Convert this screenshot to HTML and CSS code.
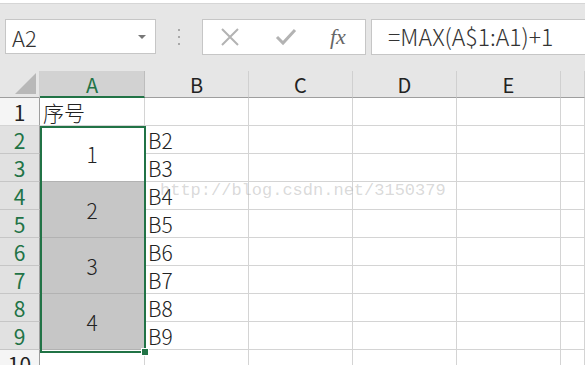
FILE: index.html
```html
<!DOCTYPE html>
<html lang="zh">

<head>
    <meta charset="UTF-8">
    <title>Excel 合并单元格序号</title>
    <link rel="stylesheet" href="styles.css">
</head>

<body>

    <!-- 编辑栏：名称框 + 按钮 + 公式 -->
    <div class="toolbar">
        <div class="name-box">
            <span>A2</span>
            <span class="caret"></span>
        </div>
        <div class="grip"><i></i><i></i><i></i></div>
        <div class="fx-box">
            <svg class="ico" width="20" height="20" viewBox="0 0 20 20">
                <path d="M2 2 L18 18 M18 2 L2 18" stroke="#b3b3b3" stroke-width="2" fill="none"/>
            </svg>
            <svg class="ico" width="22" height="20" viewBox="0 0 22 20">
                <path d="M2 10 L8 16 L20 3" stroke="#b3b3b3" stroke-width="3" fill="none"/>
            </svg>
            <span class="fx">fx</span>
        </div>
        <div class="formula">=MAX(A$1:A1)+1</div>
    </div>

    <!-- 工作表 -->
    <div class="sheet">
        <div class="grid">
            <div class="corner"><span></span></div>
            <div class="col-head active">A</div>
            <div class="col-head">B</div>
            <div class="col-head">C</div>
            <div class="col-head">D</div>
            <div class="col-head">E</div>
            <div class="col-head"></div>

            <div class="row-head">1</div>
            <div class="cell">序号</div>
            <div class="cell"></div><div class="cell"></div><div class="cell"></div><div class="cell"></div><div class="cell"></div>

            <div class="row-head sel">2</div>
            <div class="cell merged white">1</div>
            <div class="cell">B2</div><div class="cell"></div><div class="cell"></div><div class="cell"></div><div class="cell"></div>
            <div class="row-head sel">3</div>
            <div class="cell">B3</div><div class="cell"></div><div class="cell"></div><div class="cell"></div><div class="cell"></div>

            <div class="row-head sel">4</div>
            <div class="cell merged">2</div>
            <div class="cell">B4</div><div class="cell"></div><div class="cell"></div><div class="cell"></div><div class="cell"></div>
            <div class="row-head sel">5</div>
            <div class="cell">B5</div><div class="cell"></div><div class="cell"></div><div class="cell"></div><div class="cell"></div>

            <div class="row-head sel">6</div>
            <div class="cell merged">3</div>
            <div class="cell">B6</div><div class="cell"></div><div class="cell"></div><div class="cell"></div><div class="cell"></div>
            <div class="row-head sel">7</div>
            <div class="cell">B7</div><div class="cell"></div><div class="cell"></div><div class="cell"></div><div class="cell"></div>

            <div class="row-head sel">8</div>
            <div class="cell merged">4</div>
            <div class="cell">B8</div><div class="cell"></div><div class="cell"></div><div class="cell"></div><div class="cell"></div>
            <div class="row-head sel">9</div>
            <div class="cell">B9</div><div class="cell"></div><div class="cell"></div><div class="cell"></div><div class="cell"></div>

            <div class="row-head">10</div>
            <div class="cell"></div><div class="cell"></div><div class="cell"></div><div class="cell"></div><div class="cell"></div><div class="cell"></div>
        </div>

        <!-- 选区边框和填充柄 -->
        <div class="selection"><span class="handle"></span></div>
        <div class="watermark">http://blog.csdn.net/3150379</div>
    </div>

</body>

</html>
```

FILE: styles.css
```css
body {
    margin: 0;
    width: 585px;
    height: 365px;
    overflow: hidden;
    background-color: #ffffff;
    font-family: "Noto Sans CJK SC", "Noto Sans", sans-serif;
    color: #222222;
}

.toolbar {
    margin-top: 3px;
    border-top: 1px solid #d6d6d6;
    background-color: #e6e6e6;
    display: flex;
    align-items: flex-start;
    padding-top: 15px;
    box-sizing: border-box;
    height: 68px;
}

.name-box {
    margin-left: 5px;
    width: 151px;
    height: 35px;
    background-color: #ffffff;
    border: 1px solid #c6c6c6;
    box-sizing: border-box;
    display: flex;
    align-items: center;
    justify-content: space-between;
    padding: 0 9px 0 6px;
    font-size: 22px;
    font-weight: 300;
    color: #333333;
}

.caret {
    width: 0;
    height: 0;
    border-left: 4px solid transparent;
    border-right: 4px solid transparent;
    border-top: 4px solid #777777;
}

.grip {
    width: 46px;
    height: 35px;
    display: flex;
    flex-direction: column;
    align-items: center;
    justify-content: center;
    gap: 5px;
}

.grip i {
    width: 2px;
    height: 2px;
    background-color: #a8a8a8;
}

.fx-box {
    width: 164px;
    height: 36px;
    background-color: #ffffff;
    border: 1px solid #c6c6c6;
    box-sizing: border-box;
    display: flex;
    align-items: center;
    padding-left: 17px;
    gap: 35px;
}

.fx {
    font-family: "Liberation Serif", serif;
    font-style: italic;
    font-size: 22px;
    color: #666666;
    margin-left: -2px;
}

.formula {
    margin-left: 5px;
    flex: 1;
    height: 36px;
    background-color: #ffffff;
    border: 1px solid #c6c6c6;
    border-right: none;
    box-sizing: border-box;
    padding-left: 16px;
    font-size: 23px;
    font-weight: 300;
    line-height: 33px;
    color: #333333;
    white-space: nowrap;
}

.sheet {
    position: relative;
}

.grid {
    display: grid;
    grid-template-columns: 40px 105px 104px 104px 104px 104px 1fr;
    grid-template-rows: 27px repeat(10, 28px);
    font-size: 21px;
    font-weight: 300;
}

.corner {
    background-color: #e6e6e6;
    border-right: 1px solid #d0d0d0;
    border-bottom: 1px solid #9e9e9e;
    position: relative;
}

.corner span {
    position: absolute;
    right: 3px;
    bottom: 3px;
    width: 0;
    height: 0;
    border-left: 21px solid transparent;
    border-bottom: 21px solid #b8b8b8;
}

.col-head {
    background-color: #e6e6e6;
    border-right: 1px solid #d0d0d0;
    border-bottom: 1px solid #9e9e9e;
    text-align: center;
    line-height: 27px;
    font-size: 20px;
    font-weight: 400;
    color: #222222;
}

.col-head.active {
    background-color: #d2d2d2;
    color: #217346;
    border-bottom: 2px solid #217346;
    border-right-color: #bdbdbd;
}

.row-head {
    background-color: #f5f5f5;
    border-right: 1px solid #9e9e9e;
    border-bottom: 1px solid #d4d4d4;
    text-align: center;
    line-height: 28px;
    font-weight: 400;
}

.row-head.sel {
    background-color: #e1e1e1;
    color: #217346;
    border-bottom-color: #c6c6c6;
}

.cell {
    border-right: 1px solid #d4d4d4;
    border-bottom: 1px solid #d4d4d4;
    padding-left: 3px;
    line-height: 28px;
    white-space: nowrap;
}

.cell.merged {
    grid-row: span 2;
    background-color: #c6c6c6;
    border-bottom-color: #b2b2b2;
    text-align: center;
    padding-left: 0;
    line-height: 56px;
}

.cell.merged.white {
    background-color: #ffffff;
}

.selection {
    position: absolute;
    left: 40px;
    top: 55px;
    width: 106px;
    height: 227px;
    border: 2px solid #217346;
    box-sizing: border-box;
}

.handle {
    position: absolute;
    right: -5px;
    bottom: -5px;
    width: 6px;
    height: 6px;
    background-color: #217346;
    border: 1px solid #ffffff;
}

.watermark {
    position: absolute;
    left: 160px;
    top: 110px;
    font-family: "Liberation Mono", monospace;
    font-size: 17px;
    color: rgba(160, 160, 160, 0.4);
    pointer-events: none;
}
```
